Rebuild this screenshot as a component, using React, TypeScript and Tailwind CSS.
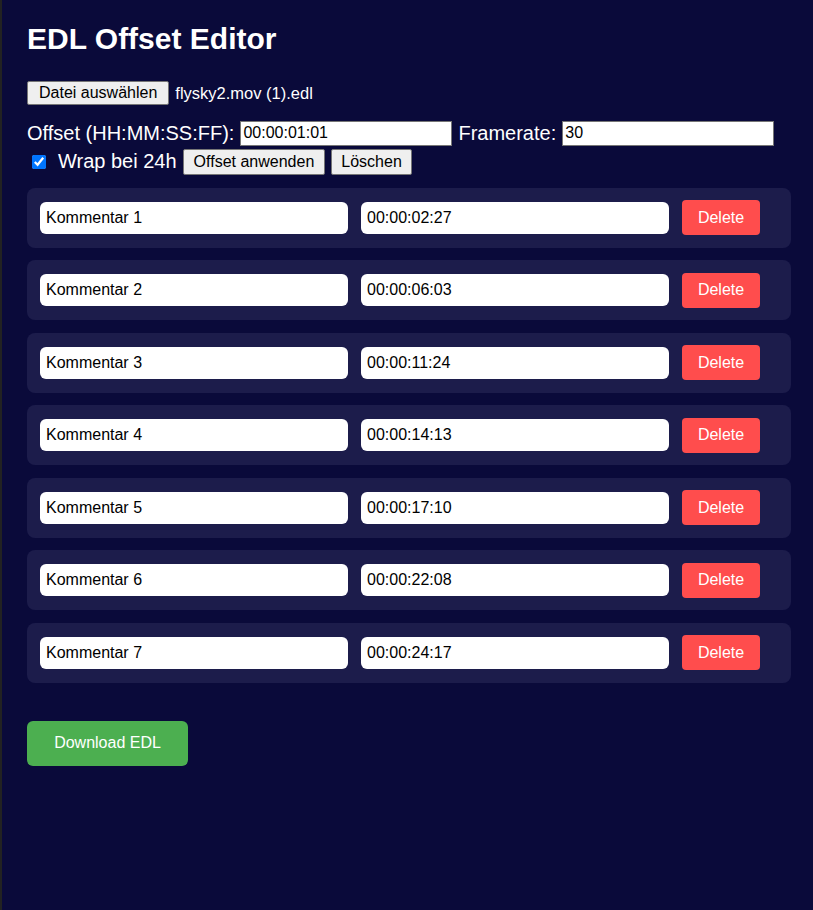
import { useState } from "react";

type Entry = { id: number; comment: string; time: string };

const initial: Entry[] = [
  { id: 1, comment: "Kommentar 1", time: "00:00:02:27" },
  { id: 2, comment: "Kommentar 2", time: "00:00:06:03" },
  { id: 3, comment: "Kommentar 3", time: "00:00:11:24" },
  { id: 4, comment: "Kommentar 4", time: "00:00:14:13" },
  { id: 5, comment: "Kommentar 5", time: "00:00:17:10" },
  { id: 6, comment: "Kommentar 6", time: "00:00:22:08" },
  { id: 7, comment: "Kommentar 7", time: "00:00:24:17" },
];

const sysBtn =
  "bg-[#efefef] text-black text-[16px] leading-[18px] border border-[#767676] rounded-[2px]";

export default function App() {
  const [entries, setEntries] = useState<Entry[]>(initial);
  const [offset, setOffset] = useState("00:00:01:01");
  const [fps, setFps] = useState("30");
  const [wrap, setWrap] = useState(true);

  const update = (id: number, key: "comment" | "time", value: string) =>
    setEntries((list) => list.map((e) => (e.id === id ? { ...e, [key]: value } : e)));

  return (
    <div className="min-h-[910px] bg-[#0a0a3a] border-l-2 border-[#222222] pl-[25px] pr-[20px] pt-[21px] text-white font-['Liberation_Sans',Arial,sans-serif]">
      <h1 className="text-[30px] font-bold leading-[36px]">EDL Offset Editor</h1>

      {/* file picker */}
      <div className="mt-[24px] flex items-center gap-[6px]">
        <button className={sysBtn + " px-[11px] h-[24px]"}>Datei auswählen</button>
        <span className="text-[16.5px]">flysky2.mov (1).edl</span>
      </div>

      {/* offset controls */}
      <div className="mt-[15px] flex items-center gap-[6px] text-[20px] leading-[23px]">
        <label>Offset (HH:MM:SS:FF):</label>
        <input
          value={offset}
          onChange={(e) => setOffset(e.target.value)}
          className="w-[212px] h-[25px] px-[2px] bg-white text-black text-[16px] border border-[#767676] outline-none"
        />
        <label>Framerate:</label>
        <input
          value={fps}
          onChange={(e) => setFps(e.target.value)}
          className="w-[212px] h-[25px] px-[2px] bg-white text-black text-[16px] border border-[#767676] outline-none"
        />
      </div>
      <div className="mt-[3px] flex items-center text-[20px] leading-[23px]">
        <input
          type="checkbox"
          checked={wrap}
          onChange={(e) => setWrap(e.target.checked)}
          className="ml-[5px] w-[14px] h-[14px] accent-[#0075ff]"
        />
        <span className="ml-[12px]">Wrap bei 24h</span>
        <button className={sysBtn + " ml-[6px] px-[10px] h-[26px]"}>Offset anwenden</button>
        <button className={sysBtn + " ml-[6px] px-[9px] h-[26px]"}>Löschen</button>
      </div>

      {/* entries */}
      <div className="mt-[13px] w-[764px] flex flex-col gap-[12.5px]">
        {entries.map((e) => (
          <div
            key={e.id}
            className="h-[60px] bg-[#1c1c4b] rounded-[8px] pl-[13px] flex items-center gap-[13px]"
          >
            <input
              value={e.comment}
              onChange={(ev) => update(e.id, "comment", ev.target.value)}
              className="w-[308px] h-[32px] px-[6px] bg-white text-black text-[16px] rounded-[6px] outline-none"
            />
            <input
              value={e.time}
              onChange={(ev) => update(e.id, "time", ev.target.value)}
              className="w-[308px] h-[32px] px-[6px] bg-white text-black text-[16px] rounded-[6px] outline-none"
            />
            <button
              onClick={() => setEntries((list) => list.filter((x) => x.id !== e.id))}
              className="w-[78px] h-[35px] bg-[#ff4d4d] text-white text-[16px] rounded-[4px]"
            >
              Delete
            </button>
          </div>
        ))}
      </div>

      <button className="mt-[38px] w-[161px] h-[45px] bg-[#4caf50] text-white text-[16px] rounded-[6px]">
        Download EDL
      </button>
    </div>
  );
}
